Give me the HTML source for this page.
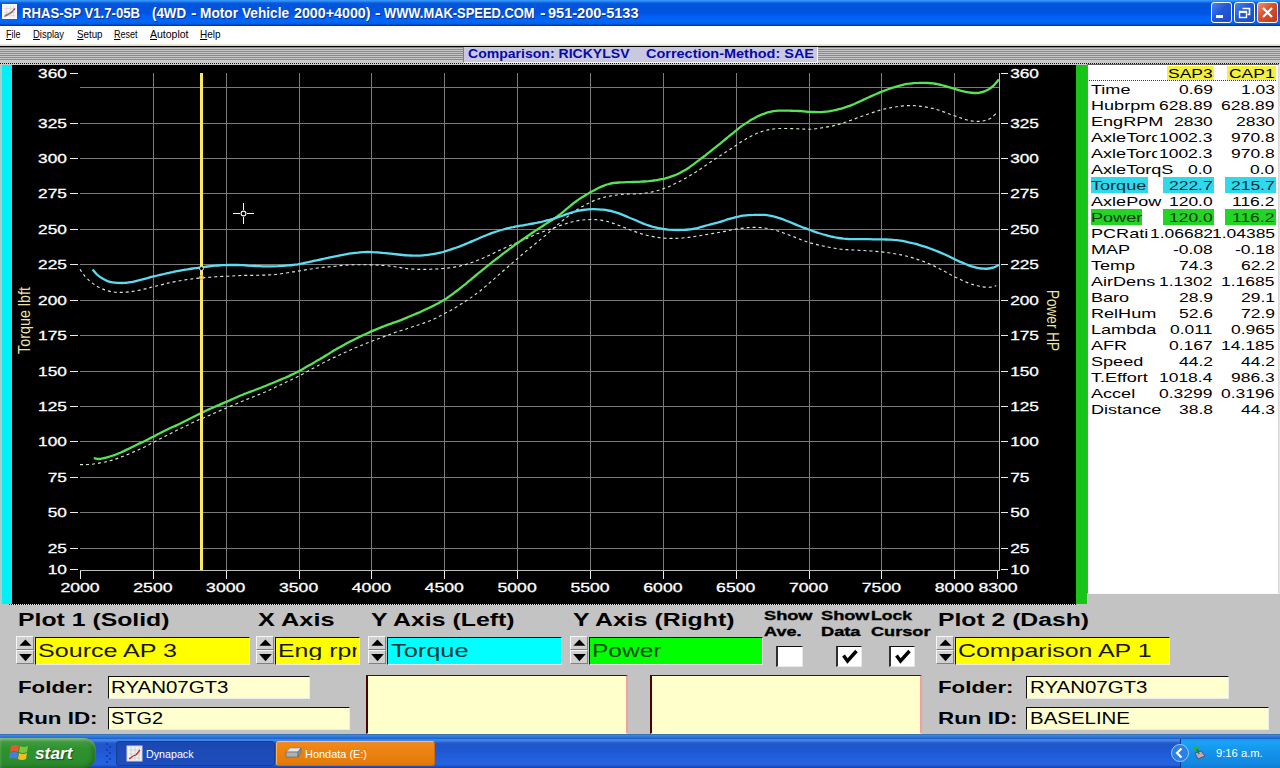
<!DOCTYPE html>
<html lang="en">
<head>
<meta charset="utf-8">
<title>RHAS-SP V1.7-05B (4WD - Motor Vehicle 2000+4000) - WWW.MAK-SPEED.COM - 951-200-5133</title>
<style>
html,body{margin:0;padding:0;}
body{width:1280px;height:768px;overflow:hidden;background:#c3c3c3;font-family:"Liberation Sans",sans-serif;}
#screen{position:relative;width:1280px;height:768px;overflow:hidden;background:#c3c3c3;}
.b{position:absolute;box-sizing:border-box;}
.t{position:absolute;white-space:pre;transform-origin:0 0;display:block;}
svg{position:absolute;left:0;top:0;}
#titlebar{background:linear-gradient(to bottom,#3598ff 0%,#2f8ff8 4%,#0a5edc 11%,#0456da 16%,#0054dc 30%,#0055e6 52%,#0060f6 64%,#0068f8 80%,#0062ee 90%,#0048c8 95%,#002c98 100%);}
.cap{border:1px solid #fff;border-radius:3px;background:linear-gradient(135deg,#4a86f0 0%,#2258d8 45%,#1c4cc8 100%);}
.cap.close{background:linear-gradient(135deg,#f09070 0%,#d8502c 45%,#c03818 100%);}
#menubar{background:linear-gradient(to bottom,#fcfcff 0%,#fff 30%,#fff 86%,#f2f2dc 91%,#d4d4ae 100%);}
#stripes{background:repeating-linear-gradient(to bottom,#8a8a8a 0px,#8a8a8a 1px,#c6c6c6 1px,#c6c6c6 2px);}
#dots{background:repeating-linear-gradient(to right,#111 0px,#111 1px,#d0d0d0 1px,#d0d0d0 2px);}
.sunk{border-top:1px solid #101010;border-left:1px solid #101010;border-right:1px solid #ececec;border-bottom:1px solid #ececec;}
.spin{background:#d0d0d0;border-top:1px solid #f8f8f8;border-left:1px solid #f8f8f8;border-right:1px solid #808080;border-bottom:1px solid #808080;}
.chk{border-left:2px solid #303030;border-right:1px solid #e8e8e8;border-bottom:1px solid #e8e8e8;}
.big{background:#ffffcc;border-top:1px solid #700000;border-left:2px solid #500000;border-right:2px solid #f0a0a0;border-bottom:1px solid #fafaf0;}
#taskbar{background:linear-gradient(to bottom,#30689c 0%,#3c86e0 4%,#2a72d8 10%,#1c62c8 13.5%,#4488ee 16.5%,#3e82ea 20%,#2862d2 25%,#2056c8 30%,#2058d4 50%,#2460dc 75%,#2462e0 90%,#1e4cc0 96%,#1a3ca4 100%);}
#start{background:linear-gradient(to bottom,#58a858 0%,#3f9c3f 12%,#2f922f 35%,#2c8e2c 70%,#2a842a 100%);border-radius:0 12px 12px 0;box-shadow:inset 0 2px 3px rgba(255,255,255,.35), inset -3px 0 4px rgba(0,40,0,.35);}
#tray{background:linear-gradient(to bottom,#1a94ee 0%,#1ba2f6 10%,#169af0 30%,#1290e8 55%,#128ae4 80%,#107cd4 100%);border-left:1px solid #0c3c94;}
.tb{border-radius:3px;}
</style>
</head>
<body>
<div id="screen">
<div class="b" id="titlebar" style="left:0px;top:0px;width:1280px;height:26px;"></div>
<svg width="20" height="22" viewBox="0 0 20 22" style="left:2px;top:4px"><rect x="0" y="0" width="15" height="15" fill="#f6f2f6"/><path d="M0.5 0.5h14v14h-14z" stroke="#fff" stroke-width="1" stroke-dasharray="1 1" fill="none"/><path d="M2 4.5h11M2 8.5h11M2 11.5h11M4.5 2v11M8.5 2v11M11.5 2v11" stroke="#d8d4dc" stroke-width="0.7" fill="none"/><path d="M2.5 12.5 L6 10.5 L9.5 8.5 L13 4.5" stroke="#a04070" stroke-width="1.3" fill="none"/><path d="M3 11 L7 9.5 L12 6" stroke="#80a060" stroke-width="1" fill="none"/></svg>
<span class="t" style="left:22.00px;top:6px;font-size:14.5px;line-height:14.5px;font-weight:bold;color:#fff;transform:scaleX(0.9057);text-shadow:1px 1px 0 #0a2f8c;">RHAS-SP V1.7-05B</span>
<span class="t" style="left:152.00px;top:6px;font-size:14.5px;line-height:14.5px;font-weight:bold;color:#fff;transform:scaleX(0.9177);text-shadow:1px 1px 0 #0a2f8c;">(4WD</span>
<span class="t" style="left:190.50px;top:6px;font-size:14.5px;line-height:14.5px;font-weight:bold;color:#fff;transform:scaleX(1.1390);text-shadow:1px 1px 0 #0a2f8c;">-</span>
<span class="t" style="left:199.50px;top:6px;font-size:14.5px;line-height:14.5px;font-weight:bold;color:#fff;transform:scaleX(0.9438);text-shadow:1px 1px 0 #0a2f8c;">Motor</span>
<span class="t" style="left:241.50px;top:6px;font-size:14.5px;line-height:14.5px;font-weight:bold;color:#fff;transform:scaleX(0.9404);text-shadow:1px 1px 0 #0a2f8c;">Vehicle</span>
<span class="t" style="left:293.50px;top:6px;font-size:14.5px;line-height:14.5px;font-weight:bold;color:#fff;transform:scaleX(0.9832);text-shadow:1px 1px 0 #0a2f8c;">2000+4000)</span>
<span class="t" style="left:374.50px;top:6px;font-size:14.5px;line-height:14.5px;font-weight:bold;color:#fff;transform:scaleX(1.1390);text-shadow:1px 1px 0 #0a2f8c;">-</span>
<span class="t" style="left:384.00px;top:6px;font-size:14.5px;line-height:14.5px;font-weight:bold;color:#fff;transform:scaleX(0.8897);text-shadow:1px 1px 0 #0a2f8c;">WWW.MAK-SPEED.COM</span>
<span class="t" style="left:539.50px;top:6px;font-size:14.5px;line-height:14.5px;font-weight:bold;color:#fff;transform:scaleX(1.1390);text-shadow:1px 1px 0 #0a2f8c;">-</span>
<span class="t" style="left:547.50px;top:6px;font-size:14.5px;line-height:14.5px;font-weight:bold;color:#fff;transform:scaleX(1.0022);text-shadow:1px 1px 0 #0a2f8c;">951-200-5133</span>
<div class="b cap" style="left:1211px;top:2px;width:21px;height:21px;"><svg width="19" height="19" viewBox="0 0 19 19"><rect x="4" y="12" width="7" height="3" fill="#fff"/></svg></div>
<div class="b cap" style="left:1234px;top:2px;width:21px;height:21px;"><svg width="19" height="19" viewBox="0 0 19 19"><path d="M7.5 5.5h7v6h-2" stroke="#fff" stroke-width="1.6" fill="none"/><rect x="4.5" y="8.5" width="7" height="6" stroke="#fff" stroke-width="1.4" fill="none"/><path d="M4.5 9h7" stroke="#fff" stroke-width="2"/></svg></div>
<div class="b cap close" style="left:1257px;top:2px;width:21px;height:21px;"><svg width="19" height="19" viewBox="0 0 19 19"><path d="M5 5l9 9M14 5l-9 9" stroke="#fff" stroke-width="2.2" fill="none"/></svg></div>
<div class="b" id="menubar" style="left:0px;top:26px;width:1280px;height:20px;"></div>
<span class="t" style="left:6px;top:29px;font-size:11px;line-height:11px;transform:scaleX(0.8181)"><u>F</u>ile</span>
<span class="t" style="left:33px;top:29px;font-size:11px;line-height:11px;transform:scaleX(0.8595)"><u>D</u>isplay</span>
<span class="t" style="left:77px;top:29px;font-size:11px;line-height:11px;transform:scaleX(0.8871)"><u>S</u>etup</span>
<span class="t" style="left:114px;top:29px;font-size:11px;line-height:11px;transform:scaleX(0.8178)"><u>R</u>eset</span>
<span class="t" style="left:150px;top:29px;font-size:11px;line-height:11px;transform:scaleX(0.9538)"><u>A</u>utoplot</span>
<span class="t" style="left:200px;top:29px;font-size:11px;line-height:11px;transform:scaleX(0.9061)"><u>H</u>elp</span>
<div class="b" style="left:0px;top:46px;width:1280px;height:1px;background:#000;"></div>
<div class="b" id="stripes" style="left:0px;top:47px;width:1280px;height:13px;"></div>
<div class="b" style="left:0px;top:60px;width:1280px;height:5px;background:#cacaca;"></div>
<div class="b" id="dots" style="left:0px;top:63px;width:1280px;height:1px;"></div>
<div class="b" style="left:463px;top:47px;width:355px;height:16px;background:#c8c9e0;border-left:1px solid #808080;border-right:1px solid #f8f8f8;border-bottom:1px solid #f4f4f4;"></div>
<span class="t" style="left:467.50px;top:47px;font-size:13.5px;line-height:13.5px;font-weight:bold;color:#0808a8;transform:scaleX(1.0402);">Comparison: RICKYLSV</span>
<span class="t" style="left:645.50px;top:47px;font-size:13.5px;line-height:13.5px;font-weight:bold;color:#0808a8;transform:scaleX(1.0718);">Correction-Method: SAE</span>
<div class="b" style="left:0px;top:65px;width:2px;height:539px;background:#a8d0c8;"></div>
<div class="b" style="left:2px;top:65px;width:10px;height:539px;background:#00f0f8;"></div>
<div class="b" style="left:12px;top:65px;width:1064px;height:539px;background:#000;"></div>
<div class="b" style="left:9px;top:604px;width:1067px;height:1px;background:repeating-linear-gradient(to right,#000 0px,#000 1px,#f0f0f0 1px,#f0f0f0 2px);"></div>
<div class="b" style="left:1076px;top:65px;width:11px;height:539px;background:#18c418;"></div>
<svg width="1280" height="768" viewBox="0 0 1280 768" font-family="Liberation Sans, sans-serif">
<path d="M80 548.5H999M80 512.5H999M80 477.5H999M80 441.5H999M80 406.5H999M80 371.5H999M80 335.5H999M80 300.5H999M80 264.5H999M80 229.5H999M80 193.5H999M80 158.5H999M80 123.5H999M80 87.5H999M153.5 73V570M226.5 73V570M299.5 73V570M371.5 73V570M444.5 73V570M517.5 73V570M590.5 73V570M663.5 73V570M736.5 73V570M809.5 73V570M881.5 73V570M954.5 73V570" stroke="#7a7a7a" stroke-width="1" fill="none" shape-rendering="crispEdges"/>
<path d="M80 570.5H1000M999.5 73V571" stroke="#bcbcbc" stroke-width="1" fill="none" shape-rendering="crispEdges"/>
<path d="M80.5 571V579M153.5 571V579M226.5 571V579M299.5 571V579M371.5 571V579M444.5 571V579M517.5 571V579M590.5 571V579M663.5 571V579M736.5 571V579M809.5 571V579M881.5 571V579M954.5 571V579M997.5 571V579M70 569.5H78M1001 569.5H1008M70 548.5H78M1001 548.5H1008M70 512.5H78M1001 512.5H1008M70 477.5H78M1001 477.5H1008M70 441.5H78M1001 441.5H1008M70 406.5H78M1001 406.5H1008M70 371.5H78M1001 371.5H1008M70 335.5H78M1001 335.5H1008M70 300.5H78M1001 300.5H1008M70 264.5H78M1001 264.5H1008M70 229.5H78M1001 229.5H1008M70 193.5H78M1001 193.5H1008M70 158.5H78M1001 158.5H1008M70 123.5H78M1001 123.5H1008M70 73.5H78M1001 73.5H1008" stroke="#ececec" stroke-width="1" fill="none" shape-rendering="crispEdges"/>
<text x="47.7" y="573.9" textLength="19.2" lengthAdjust="spacingAndGlyphs" font-size="13" fill="#fff" stroke="#fff" stroke-width="0.3">10</text>
<text x="1010.2" y="573.9" textLength="19.2" lengthAdjust="spacingAndGlyphs" font-size="13" fill="#fff" stroke="#fff" stroke-width="0.3">10</text>
<text x="47.7" y="552.7" textLength="19.2" lengthAdjust="spacingAndGlyphs" font-size="13" fill="#fff" stroke="#fff" stroke-width="0.3">25</text>
<text x="1010.2" y="552.7" textLength="19.2" lengthAdjust="spacingAndGlyphs" font-size="13" fill="#fff" stroke="#fff" stroke-width="0.3">25</text>
<text x="47.7" y="516.7" textLength="19.2" lengthAdjust="spacingAndGlyphs" font-size="13" fill="#fff" stroke="#fff" stroke-width="0.3">50</text>
<text x="1010.2" y="516.7" textLength="19.2" lengthAdjust="spacingAndGlyphs" font-size="13" fill="#fff" stroke="#fff" stroke-width="0.3">50</text>
<text x="47.7" y="481.7" textLength="19.2" lengthAdjust="spacingAndGlyphs" font-size="13" fill="#fff" stroke="#fff" stroke-width="0.3">75</text>
<text x="1010.2" y="481.7" textLength="19.2" lengthAdjust="spacingAndGlyphs" font-size="13" fill="#fff" stroke="#fff" stroke-width="0.3">75</text>
<text x="38.1" y="445.7" textLength="28.8" lengthAdjust="spacingAndGlyphs" font-size="13" fill="#fff" stroke="#fff" stroke-width="0.3">100</text>
<text x="1010.2" y="445.7" textLength="28.8" lengthAdjust="spacingAndGlyphs" font-size="13" fill="#fff" stroke="#fff" stroke-width="0.3">100</text>
<text x="38.1" y="410.7" textLength="28.8" lengthAdjust="spacingAndGlyphs" font-size="13" fill="#fff" stroke="#fff" stroke-width="0.3">125</text>
<text x="1010.2" y="410.7" textLength="28.8" lengthAdjust="spacingAndGlyphs" font-size="13" fill="#fff" stroke="#fff" stroke-width="0.3">125</text>
<text x="38.1" y="375.7" textLength="28.8" lengthAdjust="spacingAndGlyphs" font-size="13" fill="#fff" stroke="#fff" stroke-width="0.3">150</text>
<text x="1010.2" y="375.7" textLength="28.8" lengthAdjust="spacingAndGlyphs" font-size="13" fill="#fff" stroke="#fff" stroke-width="0.3">150</text>
<text x="38.1" y="339.7" textLength="28.8" lengthAdjust="spacingAndGlyphs" font-size="13" fill="#fff" stroke="#fff" stroke-width="0.3">175</text>
<text x="1010.2" y="339.7" textLength="28.8" lengthAdjust="spacingAndGlyphs" font-size="13" fill="#fff" stroke="#fff" stroke-width="0.3">175</text>
<text x="38.1" y="304.7" textLength="28.8" lengthAdjust="spacingAndGlyphs" font-size="13" fill="#fff" stroke="#fff" stroke-width="0.3">200</text>
<text x="1010.2" y="304.7" textLength="28.8" lengthAdjust="spacingAndGlyphs" font-size="13" fill="#fff" stroke="#fff" stroke-width="0.3">200</text>
<text x="38.1" y="268.7" textLength="28.8" lengthAdjust="spacingAndGlyphs" font-size="13" fill="#fff" stroke="#fff" stroke-width="0.3">225</text>
<text x="1010.2" y="268.7" textLength="28.8" lengthAdjust="spacingAndGlyphs" font-size="13" fill="#fff" stroke="#fff" stroke-width="0.3">225</text>
<text x="38.1" y="233.7" textLength="28.8" lengthAdjust="spacingAndGlyphs" font-size="13" fill="#fff" stroke="#fff" stroke-width="0.3">250</text>
<text x="1010.2" y="233.7" textLength="28.8" lengthAdjust="spacingAndGlyphs" font-size="13" fill="#fff" stroke="#fff" stroke-width="0.3">250</text>
<text x="38.1" y="197.7" textLength="28.8" lengthAdjust="spacingAndGlyphs" font-size="13" fill="#fff" stroke="#fff" stroke-width="0.3">275</text>
<text x="1010.2" y="197.7" textLength="28.8" lengthAdjust="spacingAndGlyphs" font-size="13" fill="#fff" stroke="#fff" stroke-width="0.3">275</text>
<text x="38.1" y="162.7" textLength="28.8" lengthAdjust="spacingAndGlyphs" font-size="13" fill="#fff" stroke="#fff" stroke-width="0.3">300</text>
<text x="1010.2" y="162.7" textLength="28.8" lengthAdjust="spacingAndGlyphs" font-size="13" fill="#fff" stroke="#fff" stroke-width="0.3">300</text>
<text x="38.1" y="127.7" textLength="28.8" lengthAdjust="spacingAndGlyphs" font-size="13" fill="#fff" stroke="#fff" stroke-width="0.3">325</text>
<text x="1010.2" y="127.7" textLength="28.8" lengthAdjust="spacingAndGlyphs" font-size="13" fill="#fff" stroke="#fff" stroke-width="0.3">325</text>
<text x="38.1" y="77.7" textLength="28.8" lengthAdjust="spacingAndGlyphs" font-size="13" fill="#fff" stroke="#fff" stroke-width="0.3">360</text>
<text x="1010.2" y="77.7" textLength="28.8" lengthAdjust="spacingAndGlyphs" font-size="13" fill="#fff" stroke="#fff" stroke-width="0.3">360</text>
<text x="60.4" y="591.7" textLength="39.2" lengthAdjust="spacingAndGlyphs" font-size="13" fill="#fff" stroke="#fff" stroke-width="0.3">2000</text>
<text x="133.3" y="591.7" textLength="39.2" lengthAdjust="spacingAndGlyphs" font-size="13" fill="#fff" stroke="#fff" stroke-width="0.3">2500</text>
<text x="206.1" y="591.7" textLength="39.2" lengthAdjust="spacingAndGlyphs" font-size="13" fill="#fff" stroke="#fff" stroke-width="0.3">3000</text>
<text x="279.0" y="591.7" textLength="39.2" lengthAdjust="spacingAndGlyphs" font-size="13" fill="#fff" stroke="#fff" stroke-width="0.3">3500</text>
<text x="351.8" y="591.7" textLength="39.2" lengthAdjust="spacingAndGlyphs" font-size="13" fill="#fff" stroke="#fff" stroke-width="0.3">4000</text>
<text x="424.7" y="591.7" textLength="39.2" lengthAdjust="spacingAndGlyphs" font-size="13" fill="#fff" stroke="#fff" stroke-width="0.3">4500</text>
<text x="497.5" y="591.7" textLength="39.2" lengthAdjust="spacingAndGlyphs" font-size="13" fill="#fff" stroke="#fff" stroke-width="0.3">5000</text>
<text x="570.4" y="591.7" textLength="39.2" lengthAdjust="spacingAndGlyphs" font-size="13" fill="#fff" stroke="#fff" stroke-width="0.3">5500</text>
<text x="643.3" y="591.7" textLength="39.2" lengthAdjust="spacingAndGlyphs" font-size="13" fill="#fff" stroke="#fff" stroke-width="0.3">6000</text>
<text x="716.1" y="591.7" textLength="39.2" lengthAdjust="spacingAndGlyphs" font-size="13" fill="#fff" stroke="#fff" stroke-width="0.3">6500</text>
<text x="789.0" y="591.7" textLength="39.2" lengthAdjust="spacingAndGlyphs" font-size="13" fill="#fff" stroke="#fff" stroke-width="0.3">7000</text>
<text x="861.8" y="591.7" textLength="39.2" lengthAdjust="spacingAndGlyphs" font-size="13" fill="#fff" stroke="#fff" stroke-width="0.3">7500</text>
<text x="934.7" y="591.7" textLength="39.2" lengthAdjust="spacingAndGlyphs" font-size="13" fill="#fff" stroke="#fff" stroke-width="0.3">8000</text>
<text x="978.4" y="591.7" textLength="39.2" lengthAdjust="spacingAndGlyphs" font-size="13" fill="#fff" stroke="#fff" stroke-width="0.3">8300</text>
<text transform="translate(30.2,354) scale(1.17,1) rotate(-90)" font-size="13.5" fill="#ece4a4" textLength="67" lengthAdjust="spacingAndGlyphs">Torque lbft</text>
<text transform="translate(1047,290) scale(1.17,1) rotate(90)" font-size="13.5" fill="#ece4a4" textLength="61" lengthAdjust="spacingAndGlyphs">Power HP</text>
<path d="M80.0 464.6C80.8 464.6 83.3 464.6 85.0 464.6C86.7 464.5 88.3 464.5 90.0 464.4C91.7 464.3 93.4 464.1 95.0 463.8C96.7 463.6 98.4 463.3 100.0 462.9C101.7 462.6 103.4 462.3 105.0 462.0C106.7 461.6 108.4 461.3 110.0 460.8C111.7 460.4 113.4 459.9 115.0 459.3C116.7 458.7 118.4 458.1 120.1 457.4C121.7 456.8 123.4 456.2 125.1 455.5C126.7 454.8 128.4 454.2 130.1 453.5C131.7 452.8 133.4 452.0 135.1 451.3C136.7 450.6 138.4 449.8 140.1 449.0C141.8 448.3 143.4 447.5 145.1 446.7C146.8 445.9 148.4 445.0 150.1 444.1C151.8 443.3 153.4 442.3 155.1 441.5C156.8 440.6 158.4 439.7 160.1 438.8C161.8 437.9 163.5 437.1 165.1 436.2C166.8 435.4 168.5 434.5 170.1 433.7C171.8 432.9 173.5 432.0 175.1 431.2C176.8 430.4 178.5 429.5 180.1 428.7C181.8 427.9 183.5 427.1 185.1 426.3C186.8 425.5 188.5 424.7 190.2 423.9C191.8 423.1 193.5 422.3 195.2 421.6C196.8 420.8 198.5 420.0 200.2 419.3C201.8 418.5 203.5 417.8 205.2 417.1C206.8 416.4 208.5 415.7 210.2 414.9C211.9 414.2 213.5 413.5 215.2 412.8C216.9 412.1 218.5 411.3 220.2 410.6C221.9 409.9 223.5 409.2 225.2 408.5C226.9 407.8 228.5 407.1 230.2 406.4C231.9 405.7 233.6 405.0 235.2 404.3C236.9 403.6 238.6 402.8 240.2 402.1C241.9 401.4 243.6 400.7 245.2 400.0C246.9 399.3 248.6 398.7 250.2 398.0C251.9 397.4 253.6 396.8 255.2 396.1C256.9 395.4 258.6 394.7 260.3 394.0C261.9 393.3 263.6 392.6 265.3 391.9C266.9 391.1 268.6 390.4 270.3 389.7C271.9 388.9 273.6 388.1 275.3 387.3C276.9 386.5 278.6 385.7 280.3 384.9C282.0 384.1 283.6 383.3 285.3 382.5C287.0 381.7 288.6 381.0 290.3 380.2C292.0 379.4 293.6 378.7 295.3 377.9C297.0 377.1 298.6 376.2 300.3 375.3C302.0 374.4 303.7 373.5 305.3 372.6C307.0 371.6 308.7 370.7 310.3 369.8C312.0 368.8 313.7 368.0 315.3 367.1C317.0 366.2 318.7 365.3 320.3 364.4C322.0 363.5 323.7 362.6 325.3 361.8C327.0 360.9 328.7 360.1 330.4 359.2C332.0 358.4 333.7 357.6 335.4 356.9C337.0 356.1 338.7 355.4 340.4 354.6C342.0 353.8 343.7 353.1 345.4 352.3C347.0 351.5 348.7 350.7 350.4 350.0C352.1 349.2 353.7 348.5 355.4 347.8C357.1 347.1 358.7 346.4 360.4 345.8C362.1 345.1 363.7 344.4 365.4 343.8C367.1 343.1 368.7 342.4 370.4 341.8C372.1 341.1 373.8 340.5 375.4 339.8C377.1 339.2 378.8 338.6 380.4 338.0C382.1 337.3 383.8 336.7 385.4 336.1C387.1 335.5 388.8 334.8 390.4 334.2C392.1 333.6 393.8 332.9 395.4 332.3C397.1 331.8 398.8 331.2 400.5 330.7C402.1 330.2 403.8 329.7 405.5 329.2C407.1 328.6 408.8 328.0 410.5 327.5C412.1 326.9 413.8 326.4 415.5 325.8C417.1 325.3 418.8 324.8 420.5 324.2C422.2 323.6 423.8 323.1 425.5 322.5C427.2 321.8 428.8 321.2 430.5 320.5C432.2 319.8 433.8 319.1 435.5 318.3C437.2 317.5 438.8 316.6 440.5 315.8C442.2 314.9 443.8 314.0 445.5 313.1C447.2 312.2 448.9 311.3 450.5 310.4C452.2 309.4 453.9 308.5 455.5 307.5C457.2 306.5 458.9 305.5 460.5 304.5C462.2 303.5 463.9 302.4 465.5 301.3C467.2 300.2 468.9 299.1 470.6 297.9C472.2 296.7 473.9 295.6 475.6 294.3C477.2 293.1 478.9 291.9 480.6 290.5C482.2 289.2 483.9 287.8 485.6 286.4C487.2 284.9 488.9 283.4 490.6 282.0C492.3 280.5 493.9 279.1 495.6 277.6C497.3 276.1 498.9 274.7 500.6 273.2C502.3 271.8 503.9 270.3 505.6 268.9C507.3 267.4 508.9 266.0 510.6 264.6C512.3 263.1 513.9 261.7 515.6 260.2C517.3 258.8 519.0 257.3 520.6 255.9C522.3 254.4 524.0 253.0 525.6 251.6C527.3 250.2 529.0 248.9 530.6 247.5C532.3 246.2 534.0 244.9 535.6 243.5C537.3 242.1 539.0 240.8 540.7 239.4C542.3 238.0 544.0 236.6 545.7 235.2C547.3 233.8 549.0 232.4 550.7 230.9C552.3 229.5 554.0 227.9 555.7 226.5C557.3 225.0 559.0 223.5 560.7 222.1C562.4 220.7 564.0 219.4 565.7 218.1C567.4 216.8 569.0 215.4 570.7 214.2C572.4 212.9 574.0 211.7 575.7 210.6C577.4 209.4 579.0 208.4 580.7 207.4C582.4 206.4 584.0 205.6 585.7 204.7C587.4 203.8 589.1 203.0 590.7 202.2C592.4 201.4 594.1 200.6 595.7 199.9C597.4 199.3 599.1 198.7 600.7 198.2C602.4 197.7 604.1 197.3 605.7 196.9C607.4 196.6 609.1 196.2 610.8 195.9C612.4 195.6 614.1 195.3 615.8 195.1C617.4 194.8 619.1 194.6 620.8 194.4C622.4 194.3 624.1 194.2 625.8 194.2C627.4 194.1 629.1 194.0 630.8 194.0C632.5 194.0 634.1 193.9 635.8 193.9C637.5 193.8 639.1 193.7 640.8 193.6C642.5 193.4 644.1 193.3 645.8 193.0C647.5 192.8 649.1 192.5 650.8 192.2C652.5 191.8 654.1 191.5 655.8 191.0C657.5 190.6 659.2 190.1 660.8 189.6C662.5 189.1 664.2 188.5 665.8 187.8C667.5 187.2 669.2 186.4 670.8 185.7C672.5 184.9 674.2 184.2 675.8 183.3C677.5 182.5 679.2 181.7 680.9 180.8C682.5 179.9 684.2 178.9 685.9 178.0C687.5 177.0 689.2 176.0 690.9 175.0C692.5 174.0 694.2 173.0 695.9 172.0C697.5 170.9 699.2 169.8 700.9 168.7C702.5 167.6 704.2 166.4 705.9 165.3C707.6 164.1 709.2 163.0 710.9 161.8C712.6 160.7 714.2 159.6 715.9 158.5C717.6 157.5 719.2 156.4 720.9 155.3C722.6 154.3 724.2 153.2 725.9 152.1C727.6 151.0 729.3 149.9 730.9 148.8C732.6 147.7 734.3 146.5 735.9 145.4C737.6 144.3 739.3 143.1 740.9 142.0C742.6 141.0 744.3 139.9 745.9 139.0C747.6 138.0 749.3 137.1 751.0 136.2C752.6 135.4 754.3 134.6 756.0 133.8C757.6 133.1 759.3 132.5 761.0 131.9C762.6 131.3 764.3 130.8 766.0 130.3C767.6 129.9 769.3 129.5 771.0 129.3C772.6 129.0 774.3 128.8 776.0 128.7C777.7 128.5 779.3 128.5 781.0 128.5C782.7 128.5 784.3 128.5 786.0 128.5C787.7 128.5 789.3 128.6 791.0 128.6C792.7 128.6 794.3 128.7 796.0 128.7C797.7 128.8 799.4 128.9 801.0 128.9C802.7 129.0 804.4 129.1 806.0 129.2C807.7 129.2 809.4 129.2 811.0 129.2C812.7 129.1 814.4 128.9 816.0 128.7C817.7 128.5 819.4 128.2 821.1 128.0C822.7 127.7 824.4 127.4 826.1 127.1C827.7 126.9 829.4 126.6 831.1 126.3C832.7 125.9 834.4 125.5 836.1 125.1C837.7 124.7 839.4 124.1 841.1 123.6C842.7 123.1 844.4 122.5 846.1 122.0C847.8 121.4 849.4 120.8 851.1 120.2C852.8 119.6 854.4 119.0 856.1 118.4C857.8 117.8 859.4 117.1 861.1 116.5C862.8 115.9 864.4 115.3 866.1 114.8C867.8 114.2 869.5 113.6 871.1 113.1C872.8 112.5 874.5 112.0 876.1 111.4C877.8 110.9 879.5 110.3 881.1 109.9C882.8 109.4 884.5 109.0 886.1 108.6C887.8 108.2 889.5 107.9 891.2 107.6C892.8 107.3 894.5 107.0 896.2 106.8C897.8 106.5 899.5 106.3 901.2 106.1C902.8 106.0 904.5 105.8 906.2 105.7C907.8 105.6 909.5 105.5 911.2 105.6C912.8 105.6 914.5 105.7 916.2 105.8C917.9 106.0 919.5 106.2 921.2 106.4C922.9 106.6 924.5 106.8 926.2 107.1C927.9 107.4 929.5 107.7 931.2 108.1C932.9 108.4 934.5 108.9 936.2 109.4C937.9 109.9 939.6 110.4 941.2 111.0C942.9 111.6 944.6 112.2 946.2 112.8C947.9 113.4 949.6 114.0 951.2 114.7C952.9 115.3 954.6 115.9 956.2 116.4C957.9 117.0 959.6 117.6 961.3 118.1C962.9 118.7 964.6 119.3 966.3 119.7C967.9 120.2 969.6 120.7 971.3 120.9C972.9 121.2 974.6 121.3 976.3 121.4C977.9 121.4 979.6 121.4 981.3 121.2C982.9 121.0 984.6 120.6 986.3 120.1C988.0 119.6 989.6 119.1 991.3 117.9C993.0 116.7 995.5 113.9 996.3 113.1" stroke="#d0e8cc" stroke-width="1.15" stroke-dasharray="3 3" fill="none"/>
<path d="M80.0 269.4C80.8 270.6 83.3 274.4 85.0 276.4C86.7 278.3 88.3 279.8 90.0 281.2C91.7 282.7 93.4 283.9 95.0 285.0C96.7 286.1 98.4 287.0 100.0 287.8C101.7 288.7 103.4 289.4 105.0 289.9C106.7 290.5 108.4 291.0 110.0 291.4C111.7 291.8 113.4 292.0 115.0 292.2C116.7 292.4 118.4 292.4 120.1 292.4C121.7 292.4 123.4 292.3 125.1 292.2C126.7 292.1 128.4 291.9 130.1 291.7C131.7 291.5 133.4 291.2 135.1 291.0C136.7 290.7 138.4 290.4 140.1 290.1C141.8 289.7 143.4 289.3 145.1 288.9C146.8 288.5 148.4 288.0 150.1 287.6C151.8 287.1 153.4 286.7 155.1 286.3C156.8 285.9 158.4 285.5 160.1 285.1C161.8 284.6 163.5 284.2 165.1 283.8C166.8 283.4 168.5 283.0 170.1 282.6C171.8 282.2 173.5 281.9 175.1 281.6C176.8 281.3 178.5 281.0 180.1 280.7C181.8 280.5 183.5 280.2 185.1 279.9C186.8 279.6 188.5 279.3 190.2 279.1C191.8 278.9 193.5 278.7 195.2 278.5C196.8 278.3 198.5 278.2 200.2 278.1C201.8 277.9 203.5 277.8 205.2 277.6C206.8 277.5 208.5 277.3 210.2 277.2C211.9 277.0 213.5 276.9 215.2 276.8C216.9 276.6 218.5 276.6 220.2 276.5C221.9 276.4 223.5 276.4 225.2 276.3C226.9 276.2 228.5 276.2 230.2 276.1C231.9 276.0 233.6 275.9 235.2 275.8C236.9 275.7 238.6 275.6 240.2 275.5C241.9 275.5 243.6 275.4 245.2 275.4C246.9 275.4 248.6 275.4 250.2 275.4C251.9 275.4 253.6 275.4 255.2 275.4C256.9 275.3 258.6 275.3 260.3 275.2C261.9 275.2 263.6 275.1 265.3 275.1C266.9 275.0 268.6 274.9 270.3 274.8C271.9 274.7 273.6 274.6 275.3 274.5C276.9 274.3 278.6 274.1 280.3 273.9C282.0 273.6 283.6 273.4 285.3 273.1C287.0 272.8 288.6 272.6 290.3 272.3C292.0 272.0 293.6 271.8 295.3 271.5C297.0 271.3 298.6 271.0 300.3 270.7C302.0 270.5 303.7 270.2 305.3 269.9C307.0 269.6 308.7 269.3 310.3 269.0C312.0 268.8 313.7 268.6 315.3 268.3C317.0 268.1 318.7 267.9 320.3 267.7C322.0 267.5 323.7 267.3 325.3 267.1C327.0 267.0 328.7 266.8 330.4 266.7C332.0 266.5 333.7 266.4 335.4 266.2C337.0 266.0 338.7 265.8 340.4 265.6C342.0 265.5 343.7 265.3 345.4 265.2C347.0 265.1 348.7 264.9 350.4 264.9C352.1 264.8 353.7 264.7 355.4 264.7C357.1 264.7 358.7 264.7 360.4 264.7C362.1 264.7 363.7 264.7 365.4 264.7C367.1 264.8 368.7 264.8 370.4 264.8C372.1 264.9 373.8 264.9 375.4 265.0C377.1 265.1 378.8 265.2 380.4 265.3C382.1 265.3 383.8 265.4 385.4 265.6C387.1 265.7 388.8 265.9 390.4 266.1C392.1 266.3 393.8 266.6 395.4 266.8C397.1 267.1 398.8 267.3 400.5 267.6C402.1 267.9 403.8 268.1 405.5 268.4C407.1 268.6 408.8 268.8 410.5 268.9C412.1 269.1 413.8 269.2 415.5 269.2C417.1 269.3 418.8 269.3 420.5 269.4C422.2 269.4 423.8 269.4 425.5 269.4C427.2 269.4 428.8 269.4 430.5 269.3C432.2 269.2 433.8 269.1 435.5 269.0C437.2 268.9 438.8 268.8 440.5 268.7C442.2 268.6 443.8 268.4 445.5 268.3C447.2 268.1 448.9 267.9 450.5 267.7C452.2 267.5 453.9 267.2 455.5 266.9C457.2 266.6 458.9 266.3 460.5 265.9C462.2 265.5 463.9 265.1 465.5 264.6C467.2 264.1 468.9 263.5 470.6 262.9C472.2 262.4 473.9 261.7 475.6 261.1C477.2 260.5 478.9 259.8 480.6 259.1C482.2 258.4 483.9 257.7 485.6 256.9C487.2 256.2 488.9 255.5 490.6 254.7C492.3 253.9 493.9 253.1 495.6 252.2C497.3 251.4 498.9 250.6 500.6 249.8C502.3 249.0 503.9 248.2 505.6 247.5C507.3 246.7 508.9 246.0 510.6 245.3C512.3 244.6 513.9 243.9 515.6 243.2C517.3 242.5 519.0 241.8 520.6 241.1C522.3 240.3 524.0 239.6 525.6 238.9C527.3 238.1 529.0 237.3 530.6 236.6C532.3 235.9 534.0 235.1 535.6 234.4C537.3 233.7 539.0 233.1 540.7 232.5C542.3 231.9 544.0 231.3 545.7 230.8C547.3 230.2 549.0 229.7 550.7 229.1C552.3 228.5 554.0 227.9 555.7 227.3C557.3 226.7 559.0 226.0 560.7 225.4C562.4 224.8 564.0 224.2 565.7 223.7C567.4 223.2 569.0 222.7 570.7 222.2C572.4 221.8 574.0 221.4 575.7 221.1C577.4 220.7 579.0 220.4 580.7 220.2C582.4 220.0 584.0 219.8 585.7 219.7C587.4 219.6 589.1 219.6 590.7 219.5C592.4 219.5 594.1 219.5 595.7 219.6C597.4 219.7 599.1 219.9 600.7 220.1C602.4 220.4 604.1 220.7 605.7 221.1C607.4 221.5 609.1 222.0 610.8 222.5C612.4 223.0 614.1 223.6 615.8 224.2C617.4 224.8 619.1 225.5 620.8 226.1C622.4 226.8 624.1 227.4 625.8 228.1C627.4 228.7 629.1 229.4 630.8 230.0C632.5 230.6 634.1 231.3 635.8 231.9C637.5 232.5 639.1 233.0 640.8 233.6C642.5 234.1 644.1 234.6 645.8 235.0C647.5 235.5 649.1 235.9 650.8 236.2C652.5 236.5 654.1 236.8 655.8 237.1C657.5 237.4 659.2 237.6 660.8 237.8C662.5 238.0 664.2 238.2 665.8 238.3C667.5 238.4 669.2 238.4 670.8 238.4C672.5 238.5 674.2 238.4 675.8 238.3C677.5 238.3 679.2 238.2 680.9 238.1C682.5 238.0 684.2 237.8 685.9 237.6C687.5 237.5 689.2 237.3 690.9 237.1C692.5 236.8 694.2 236.6 695.9 236.3C697.5 236.0 699.2 235.8 700.9 235.5C702.5 235.2 704.2 234.9 705.9 234.6C707.6 234.3 709.2 234.1 710.9 233.8C712.6 233.5 714.2 233.3 715.9 233.0C717.6 232.7 719.2 232.4 720.9 232.1C722.6 231.8 724.2 231.4 725.9 231.1C727.6 230.7 729.3 230.4 730.9 230.0C732.6 229.7 734.3 229.4 735.9 229.1C737.6 228.9 739.3 228.6 740.9 228.4C742.6 228.2 744.3 228.0 745.9 227.8C747.6 227.7 749.3 227.5 751.0 227.5C752.6 227.4 754.3 227.4 756.0 227.4C757.6 227.4 759.3 227.5 761.0 227.6C762.6 227.7 764.3 227.9 766.0 228.2C767.6 228.5 769.3 228.8 771.0 229.2C772.6 229.5 774.3 229.9 776.0 230.4C777.7 230.9 779.3 231.4 781.0 232.0C782.7 232.6 784.3 233.3 786.0 233.9C787.7 234.6 789.3 235.2 791.0 235.8C792.7 236.4 794.3 237.0 796.0 237.6C797.7 238.2 799.4 238.9 801.0 239.6C802.7 240.2 804.4 241.0 806.0 241.5C807.7 242.1 809.4 242.7 811.0 243.1C812.7 243.6 814.4 244.0 816.0 244.4C817.7 244.8 819.4 245.2 821.1 245.6C822.7 245.9 824.4 246.3 826.1 246.7C827.7 247.0 829.4 247.3 831.1 247.6C832.7 247.9 834.4 248.2 836.1 248.5C837.7 248.8 839.4 249.0 841.1 249.2C842.7 249.4 844.4 249.5 846.1 249.6C847.8 249.7 849.4 249.7 851.1 249.8C852.8 249.9 854.4 250.0 856.1 250.1C857.8 250.2 859.4 250.3 861.1 250.4C862.8 250.5 864.4 250.6 866.1 250.7C867.8 250.8 869.5 250.9 871.1 251.0C872.8 251.2 874.5 251.3 876.1 251.4C877.8 251.6 879.5 251.7 881.1 251.9C882.8 252.1 884.5 252.2 886.1 252.4C887.8 252.6 889.5 252.9 891.2 253.1C892.8 253.4 894.5 253.7 896.2 254.0C897.8 254.3 899.5 254.6 901.2 254.9C902.8 255.3 904.5 255.6 906.2 256.0C907.8 256.4 909.5 256.9 911.2 257.4C912.8 257.9 914.5 258.4 916.2 259.0C917.9 259.5 919.5 260.1 921.2 260.7C922.9 261.3 924.5 261.9 926.2 262.6C927.9 263.2 929.5 263.9 931.2 264.7C932.9 265.4 934.5 266.2 936.2 267.0C937.9 267.8 939.6 268.7 941.2 269.6C942.9 270.4 944.6 271.4 946.2 272.2C947.9 273.1 949.6 274.0 951.2 274.9C952.9 275.8 954.6 276.6 956.2 277.5C957.9 278.3 959.6 279.1 961.3 279.9C962.9 280.7 964.6 281.5 966.3 282.1C967.9 282.8 969.6 283.4 971.3 284.0C972.9 284.5 974.6 285.1 976.3 285.5C977.9 285.9 979.6 286.4 981.3 286.6C982.9 286.9 984.6 287.1 986.3 287.1C988.0 287.2 989.6 287.4 991.3 287.1C993.0 286.9 995.5 285.9 996.3 285.6" stroke="#d8e8e8" stroke-width="1.15" stroke-dasharray="3 3" fill="none"/>
<path d="M93.8 458.1C94.6 458.2 97.1 459.0 98.8 459.0C100.5 459.0 102.1 458.5 103.8 458.1C105.5 457.8 107.1 457.4 108.8 456.9C110.5 456.5 112.1 455.9 113.8 455.3C115.5 454.7 117.1 454.0 118.8 453.3C120.5 452.6 122.1 451.8 123.8 451.1C125.5 450.3 127.1 449.5 128.8 448.7C130.5 447.9 132.1 447.0 133.8 446.2C135.5 445.4 137.1 444.6 138.8 443.8C140.5 443.0 142.1 442.3 143.8 441.5C145.5 440.7 147.1 439.9 148.8 439.0C150.5 438.2 152.1 437.3 153.8 436.4C155.5 435.5 157.1 434.6 158.8 433.8C160.5 432.9 162.1 432.1 163.8 431.2C165.5 430.4 167.1 429.6 168.8 428.8C170.5 428.1 172.1 427.3 173.8 426.5C175.5 425.7 177.1 425.0 178.8 424.2C180.5 423.4 182.1 422.6 183.8 421.8C185.5 421.0 187.1 420.2 188.8 419.3C190.5 418.5 192.1 417.6 193.8 416.8C195.5 415.9 197.1 415.0 198.8 414.2C200.5 413.4 202.1 412.5 203.8 411.7C205.5 411.0 207.1 410.2 208.8 409.4C210.5 408.7 212.1 407.9 213.8 407.2C215.5 406.5 217.1 405.8 218.8 405.1C220.5 404.4 222.1 403.7 223.8 402.9C225.5 402.2 227.1 401.5 228.8 400.7C230.5 400.0 232.1 399.2 233.8 398.5C235.5 397.7 237.1 396.9 238.8 396.2C240.5 395.5 242.1 394.9 243.8 394.2C245.5 393.6 247.1 393.0 248.8 392.3C250.5 391.7 252.1 391.1 253.8 390.5C255.5 389.8 257.1 389.2 258.8 388.5C260.5 387.9 262.1 387.2 263.8 386.5C265.5 385.9 267.1 385.2 268.8 384.5C270.5 383.8 272.1 383.2 273.8 382.5C275.5 381.8 277.1 381.1 278.8 380.4C280.5 379.7 282.1 379.0 283.8 378.3C285.5 377.6 287.1 376.8 288.8 376.1C290.5 375.3 292.1 374.5 293.8 373.7C295.5 372.9 297.1 372.1 298.8 371.2C300.5 370.3 302.1 369.4 303.8 368.4C305.5 367.5 307.1 366.5 308.8 365.6C310.5 364.6 312.1 363.7 313.8 362.7C315.5 361.7 317.1 360.7 318.8 359.8C320.5 358.8 322.1 357.7 323.8 356.7C325.5 355.7 327.1 354.7 328.8 353.7C330.5 352.7 332.1 351.6 333.8 350.6C335.5 349.7 337.1 348.7 338.8 347.7C340.5 346.8 342.1 345.9 343.8 344.9C345.5 344.0 347.1 343.1 348.8 342.3C350.5 341.4 352.1 340.5 353.8 339.7C355.5 338.8 357.1 338.0 358.8 337.2C360.5 336.4 362.1 335.6 363.8 334.8C365.5 334.1 367.1 333.3 368.8 332.6C370.5 331.8 372.1 331.1 373.8 330.4C375.5 329.7 377.1 329.0 378.8 328.3C380.5 327.6 382.1 326.9 383.8 326.3C385.5 325.6 387.1 325.0 388.8 324.4C390.5 323.8 392.1 323.3 393.8 322.7C395.5 322.1 397.1 321.5 398.8 320.9C400.5 320.3 402.1 319.6 403.8 318.9C405.5 318.3 407.1 317.5 408.8 316.8C410.5 316.1 412.1 315.4 413.8 314.7C415.5 314.0 417.1 313.3 418.8 312.6C420.5 311.8 422.1 311.1 423.8 310.3C425.5 309.6 427.1 308.8 428.8 308.0C430.5 307.2 432.1 306.4 433.8 305.6C435.5 304.7 437.1 303.9 438.8 303.0C440.5 302.0 442.1 301.1 443.8 300.0C445.5 299.0 447.1 297.9 448.8 296.7C450.5 295.6 452.1 294.4 453.8 293.1C455.5 291.9 457.1 290.6 458.8 289.3C460.5 288.0 462.1 286.7 463.8 285.3C465.5 284.0 467.1 282.6 468.8 281.2C470.5 279.9 472.1 278.5 473.8 277.1C475.5 275.7 477.1 274.3 478.8 272.9C480.5 271.6 482.1 270.2 483.8 268.8C485.5 267.5 487.1 266.1 488.8 264.8C490.5 263.5 492.1 262.2 493.8 260.9C495.5 259.6 497.1 258.4 498.8 257.1C500.5 255.8 502.1 254.5 503.8 253.2C505.5 251.9 507.1 250.7 508.8 249.4C510.5 248.2 512.1 246.9 513.8 245.7C515.5 244.5 517.1 243.3 518.8 242.2C520.5 241.0 522.1 239.8 523.8 238.7C525.5 237.5 527.1 236.4 528.8 235.2C530.5 234.1 532.1 232.9 533.8 231.8C535.5 230.7 537.1 229.6 538.8 228.5C540.5 227.4 542.1 226.3 543.8 225.2C545.5 224.1 547.1 223.1 548.8 222.0C550.5 221.0 552.1 219.9 553.8 218.8C555.5 217.7 557.1 216.5 558.8 215.3C560.5 214.0 562.1 212.7 563.8 211.3C565.5 209.9 567.1 208.5 568.8 207.1C570.5 205.7 572.1 204.3 573.8 203.0C575.5 201.8 577.1 200.6 578.8 199.4C580.5 198.3 582.1 197.3 583.8 196.2C585.5 195.2 587.1 194.2 588.8 193.2C590.5 192.3 592.1 191.3 593.8 190.4C595.5 189.4 597.1 188.5 598.8 187.7C600.5 186.9 602.1 186.2 603.8 185.6C605.5 184.9 607.1 184.4 608.8 184.0C610.5 183.6 612.1 183.2 613.8 183.0C615.5 182.8 617.1 182.6 618.8 182.5C620.5 182.4 622.1 182.4 623.8 182.3C625.5 182.2 627.1 182.2 628.8 182.1C630.5 182.1 632.1 182.1 633.8 182.0C635.5 181.9 637.1 181.9 638.8 181.8C640.5 181.7 642.1 181.6 643.8 181.5C645.5 181.4 647.1 181.2 648.8 181.1C650.5 180.9 652.1 180.7 653.8 180.5C655.5 180.3 657.1 180.0 658.8 179.7C660.5 179.5 662.1 179.1 663.8 178.8C665.5 178.4 667.1 177.9 668.8 177.4C670.5 176.8 672.1 176.3 673.8 175.6C675.5 175.0 677.1 174.3 678.8 173.5C680.5 172.7 682.1 171.8 683.8 170.8C685.5 169.8 687.1 168.8 688.8 167.7C690.5 166.5 692.1 165.3 693.8 164.1C695.5 162.8 697.1 161.6 698.8 160.3C700.5 159.0 702.1 157.8 703.8 156.5C705.5 155.2 707.1 153.9 708.8 152.6C710.5 151.4 712.1 150.1 713.8 148.7C715.5 147.4 717.1 146.1 718.8 144.7C720.5 143.4 722.1 142.0 723.8 140.6C725.5 139.2 727.1 137.8 728.8 136.4C730.5 135.0 732.1 133.6 733.8 132.3C735.5 130.9 737.1 129.6 738.8 128.3C740.5 127.0 742.1 125.7 743.8 124.6C745.5 123.4 747.1 122.4 748.8 121.4C750.5 120.3 752.1 119.4 753.8 118.4C755.5 117.5 757.1 116.6 758.8 115.8C760.5 115.1 762.1 114.4 763.8 113.8C765.5 113.2 767.1 112.6 768.8 112.2C770.5 111.8 772.1 111.4 773.8 111.1C775.5 110.9 777.1 110.8 778.8 110.7C780.5 110.6 782.1 110.7 783.8 110.7C785.5 110.7 787.1 110.7 788.8 110.7C790.5 110.7 792.1 110.8 793.8 110.8C795.5 110.9 797.1 110.9 798.8 111.0C800.5 111.1 802.1 111.3 803.8 111.4C805.5 111.5 807.1 111.7 808.8 111.8C810.5 111.9 812.1 112.0 813.8 112.0C815.5 112.1 817.1 112.1 818.8 112.1C820.5 112.0 822.1 112.1 823.8 111.9C825.5 111.8 827.1 111.7 828.8 111.4C830.5 111.1 832.1 110.7 833.8 110.4C835.5 110.0 837.1 109.6 838.8 109.1C840.5 108.7 842.1 108.3 843.8 107.8C845.5 107.3 847.1 106.8 848.8 106.2C850.5 105.6 852.1 104.9 853.8 104.2C855.5 103.4 857.1 102.7 858.8 101.9C860.5 101.1 862.1 100.4 863.8 99.6C865.5 98.8 867.1 98.0 868.8 97.3C870.5 96.5 872.1 95.8 873.8 95.0C875.5 94.3 877.1 93.6 878.8 92.9C880.5 92.2 882.1 91.5 883.8 90.9C885.5 90.2 887.1 89.6 888.8 89.0C890.5 88.5 892.1 87.9 893.8 87.4C895.5 86.8 897.1 86.3 898.8 85.9C900.5 85.4 902.1 85.0 903.8 84.6C905.5 84.2 907.1 83.9 908.8 83.7C910.5 83.4 912.1 83.3 913.8 83.1C915.5 83.0 917.1 82.9 918.8 82.9C920.5 82.8 922.1 82.8 923.8 82.8C925.5 82.8 927.1 82.8 928.8 83.0C930.5 83.1 932.1 83.3 933.8 83.5C935.5 83.8 937.1 84.1 938.8 84.5C940.5 84.8 942.1 85.3 943.8 85.7C945.5 86.1 947.1 86.6 948.8 87.1C950.5 87.6 952.1 88.1 953.8 88.6C955.5 89.1 957.1 89.6 958.8 90.1C960.5 90.6 962.1 91.0 963.8 91.4C965.5 91.8 967.1 92.2 968.8 92.4C970.5 92.7 972.1 92.9 973.8 93.0C975.5 93.0 977.1 93.1 978.8 92.8C980.5 92.6 982.1 92.3 983.8 91.7C985.5 91.1 987.1 90.2 988.8 89.2C990.5 88.1 992.1 87.0 993.8 85.4C995.5 83.8 998.0 80.4 998.8 79.4" stroke="#58e256" stroke-width="2.3" fill="none" stroke-linejoin="round"/>
<path d="M92.5 269.4C93.3 270.3 95.8 273.5 97.5 275.0C99.2 276.5 100.8 277.6 102.5 278.6C104.2 279.6 105.9 280.5 107.5 281.1C109.2 281.7 110.9 282.1 112.5 282.4C114.2 282.7 115.9 282.8 117.5 282.9C119.2 283.0 120.9 283.0 122.5 283.0C124.2 282.9 125.9 282.9 127.6 282.7C129.2 282.5 130.9 282.1 132.6 281.8C134.2 281.5 135.9 281.0 137.6 280.6C139.2 280.2 140.9 279.8 142.6 279.4C144.2 279.0 145.9 278.5 147.6 278.1C149.2 277.6 150.9 277.1 152.6 276.7C154.3 276.3 155.9 275.9 157.6 275.5C159.3 275.1 160.9 274.7 162.6 274.3C164.3 273.9 165.9 273.6 167.6 273.2C169.3 272.8 170.9 272.4 172.6 272.1C174.3 271.7 176.0 271.4 177.6 271.1C179.3 270.8 181.0 270.5 182.6 270.2C184.3 269.9 186.0 269.6 187.6 269.4C189.3 269.1 191.0 268.8 192.6 268.5C194.3 268.3 196.0 268.0 197.7 267.8C199.3 267.6 201.0 267.4 202.7 267.2C204.3 267.0 206.0 266.8 207.7 266.5C209.3 266.3 211.0 266.1 212.7 265.9C214.3 265.8 216.0 265.6 217.7 265.5C219.3 265.4 221.0 265.3 222.7 265.2C224.4 265.1 226.0 265.1 227.7 265.0C229.4 265.0 231.0 265.0 232.7 265.0C234.4 265.0 236.0 265.0 237.7 265.0C239.4 265.1 241.0 265.2 242.7 265.2C244.4 265.3 246.1 265.4 247.7 265.6C249.4 265.7 251.1 265.8 252.7 265.9C254.4 266.0 256.1 266.0 257.7 266.1C259.4 266.2 261.1 266.2 262.7 266.3C264.4 266.3 266.1 266.4 267.8 266.4C269.4 266.4 271.1 266.3 272.8 266.3C274.4 266.2 276.1 266.1 277.8 266.1C279.4 266.0 281.1 265.9 282.8 265.8C284.4 265.7 286.1 265.6 287.8 265.4C289.4 265.3 291.1 265.2 292.8 265.0C294.5 264.8 296.1 264.5 297.8 264.3C299.5 264.0 301.1 263.7 302.8 263.4C304.5 263.1 306.1 262.7 307.8 262.3C309.5 262.0 311.1 261.6 312.8 261.2C314.5 260.8 316.2 260.5 317.8 260.1C319.5 259.7 321.2 259.3 322.8 259.0C324.5 258.6 326.2 258.2 327.8 257.9C329.5 257.5 331.2 257.2 332.8 256.8C334.5 256.5 336.2 256.1 337.9 255.8C339.5 255.4 341.2 255.1 342.9 254.8C344.5 254.5 346.2 254.2 347.9 253.9C349.5 253.6 351.2 253.4 352.9 253.1C354.5 252.9 356.2 252.7 357.9 252.6C359.5 252.4 361.2 252.3 362.9 252.2C364.6 252.1 366.2 252.0 367.9 252.0C369.6 252.0 371.2 252.0 372.9 252.1C374.6 252.1 376.2 252.3 377.9 252.4C379.6 252.5 381.2 252.7 382.9 252.9C384.6 253.0 386.3 253.2 387.9 253.3C389.6 253.5 391.3 253.7 392.9 253.9C394.6 254.1 396.3 254.3 397.9 254.5C399.6 254.7 401.3 254.9 402.9 255.0C404.6 255.2 406.3 255.3 408.0 255.4C409.6 255.5 411.3 255.5 413.0 255.6C414.6 255.6 416.3 255.6 418.0 255.6C419.6 255.6 421.3 255.5 423.0 255.4C424.6 255.3 426.3 255.1 428.0 254.9C429.7 254.7 431.3 254.5 433.0 254.2C434.7 253.9 436.3 253.6 438.0 253.2C439.7 252.8 441.3 252.4 443.0 252.0C444.7 251.5 446.3 251.0 448.0 250.4C449.7 249.9 451.3 249.3 453.0 248.7C454.7 248.2 456.4 247.6 458.0 247.0C459.7 246.4 461.4 245.7 463.0 245.1C464.7 244.4 466.4 243.7 468.0 243.0C469.7 242.3 471.4 241.6 473.0 240.9C474.7 240.1 476.4 239.4 478.1 238.7C479.7 237.9 481.4 237.2 483.1 236.5C484.7 235.8 486.4 235.1 488.1 234.5C489.7 233.9 491.4 233.2 493.1 232.7C494.7 232.1 496.4 231.5 498.1 231.0C499.8 230.4 501.4 229.9 503.1 229.5C504.8 229.0 506.4 228.6 508.1 228.2C509.8 227.8 511.4 227.4 513.1 227.1C514.8 226.7 516.4 226.4 518.1 226.1C519.8 225.8 521.4 225.6 523.1 225.3C524.8 225.0 526.5 224.7 528.1 224.4C529.8 224.1 531.5 223.8 533.1 223.5C534.8 223.2 536.5 222.9 538.1 222.5C539.8 222.2 541.5 221.9 543.1 221.5C544.8 221.1 546.5 220.7 548.2 220.2C549.8 219.8 551.5 219.2 553.2 218.8C554.8 218.3 556.5 217.8 558.2 217.2C559.8 216.7 561.5 216.1 563.2 215.5C564.8 214.9 566.5 214.2 568.2 213.7C569.9 213.1 571.5 212.5 573.2 212.0C574.9 211.6 576.5 211.2 578.2 210.8C579.9 210.5 581.5 210.2 583.2 210.0C584.9 209.8 586.5 209.6 588.2 209.4C589.9 209.3 591.5 209.2 593.2 209.2C594.9 209.2 596.6 209.2 598.2 209.3C599.9 209.4 601.6 209.5 603.2 209.7C604.9 209.9 606.6 210.2 608.2 210.5C609.9 210.8 611.6 211.1 613.2 211.6C614.9 212.0 616.6 212.5 618.3 213.1C619.9 213.7 621.6 214.4 623.3 215.1C624.9 215.7 626.6 216.5 628.3 217.2C629.9 217.9 631.6 218.6 633.3 219.3C634.9 220.0 636.6 220.8 638.3 221.5C640.0 222.2 641.6 222.9 643.3 223.6C645.0 224.2 646.6 224.9 648.3 225.4C650.0 226.0 651.6 226.5 653.3 227.0C655.0 227.4 656.6 227.8 658.3 228.1C660.0 228.5 661.6 228.7 663.3 229.0C665.0 229.2 666.7 229.4 668.3 229.6C670.0 229.7 671.7 229.8 673.3 229.9C675.0 230.0 676.7 230.0 678.3 230.0C680.0 230.0 681.7 229.9 683.3 229.9C685.0 229.8 686.7 229.7 688.4 229.5C690.0 229.4 691.7 229.1 693.4 228.8C695.0 228.5 696.7 228.2 698.4 227.8C700.0 227.4 701.7 226.9 703.4 226.4C705.0 225.9 706.7 225.4 708.4 225.0C710.1 224.5 711.7 224.1 713.4 223.7C715.1 223.2 716.7 222.8 718.4 222.4C720.1 221.9 721.7 221.4 723.4 220.8C725.1 220.3 726.7 219.7 728.4 219.2C730.1 218.7 731.8 218.2 733.4 217.8C735.1 217.3 736.8 216.9 738.4 216.6C740.1 216.2 741.8 215.9 743.4 215.6C745.1 215.4 746.8 215.2 748.4 215.1C750.1 215.0 751.8 214.9 753.4 214.9C755.1 214.8 756.8 214.8 758.5 214.9C760.1 214.9 761.8 214.8 763.5 214.9C765.1 215.0 766.8 215.0 768.5 215.3C770.1 215.5 771.8 215.8 773.5 216.3C775.1 216.7 776.8 217.2 778.5 217.8C780.2 218.3 781.8 218.9 783.5 219.5C785.2 220.2 786.8 220.9 788.5 221.5C790.2 222.2 791.8 222.9 793.5 223.6C795.2 224.3 796.8 225.0 798.5 225.7C800.2 226.4 801.9 227.0 803.5 227.7C805.2 228.3 806.9 228.9 808.5 229.5C810.2 230.1 811.9 230.7 813.5 231.3C815.2 231.9 816.9 232.4 818.5 233.0C820.2 233.5 821.9 234.0 823.5 234.5C825.2 235.0 826.9 235.4 828.6 235.9C830.2 236.3 831.9 236.7 833.6 237.0C835.2 237.4 836.9 237.7 838.6 238.0C840.2 238.3 841.9 238.5 843.6 238.7C845.2 238.8 846.9 238.9 848.6 239.0C850.3 239.0 851.9 239.0 853.6 239.1C855.3 239.1 856.9 239.1 858.6 239.1C860.3 239.1 861.9 239.1 863.6 239.1C865.3 239.2 866.9 239.2 868.6 239.2C870.3 239.2 872.0 239.2 873.6 239.3C875.3 239.3 877.0 239.3 878.6 239.3C880.3 239.3 882.0 239.4 883.6 239.4C885.3 239.5 887.0 239.5 888.6 239.6C890.3 239.7 892.0 239.7 893.6 239.9C895.3 240.0 897.0 240.1 898.7 240.4C900.3 240.6 902.0 240.9 903.7 241.2C905.3 241.5 907.0 241.9 908.7 242.3C910.3 242.6 912.0 243.0 913.7 243.5C915.3 243.9 917.0 244.3 918.7 244.8C920.4 245.3 922.0 245.8 923.7 246.3C925.4 246.9 927.0 247.4 928.7 248.0C930.4 248.6 932.0 249.2 933.7 249.9C935.4 250.5 937.0 251.2 938.7 251.9C940.4 252.6 942.1 253.3 943.7 254.0C945.4 254.7 947.1 255.5 948.7 256.3C950.4 257.1 952.1 257.9 953.7 258.7C955.4 259.5 957.1 260.3 958.7 261.1C960.4 261.9 962.1 262.6 963.7 263.3C965.4 264.0 967.1 264.7 968.8 265.3C970.4 265.9 972.1 266.5 973.8 266.9C975.4 267.4 977.1 267.8 978.8 268.1C980.4 268.4 982.1 268.6 983.8 268.7C985.4 268.8 987.1 268.7 988.8 268.5C990.5 268.3 992.1 268.0 993.8 267.4C995.5 266.7 998.0 265.2 998.8 264.8" stroke="#5cdcf0" stroke-width="2.3" fill="none" stroke-linejoin="round"/>
<rect x="200" y="73" width="3" height="497" fill="#fae85e"/>
<circle cx="201.5" cy="268.5" r="2" stroke="#f0e0e0" stroke-width="1" fill="#000"/>
<circle cx="201.5" cy="277.5" r="2" stroke="#f0a040" stroke-width="1" fill="none"/>
<path d="M233 213.5H240M247 213.5H254M243.5 203V210M243.5 217V224" stroke="#fff" stroke-width="1" fill="none" shape-rendering="crispEdges"/><circle cx="243.5" cy="213.5" r="2.4" stroke="#fff" stroke-width="1.1" fill="none"/>
</svg>
<div class="b" style="left:1279px;top:64px;width:1px;height:530px;background:#e4e4e4;"></div>
<div class="b" style="left:1087px;top:64px;width:192px;height:530px;background:#fff;border-left:1px solid #808080;border-top:1px solid #606060;border-right:1px solid #d8d8d8;border-bottom:1px solid #f8f8f8;"></div>
<div class="b" style="left:1167px;top:66px;width:47px;height:14px;background:#f4f040;"></div>
<div class="b" style="left:1227px;top:66px;width:49px;height:14px;background:#f4f040;"></div>
<div class="b" style="left:1089px;top:80px;width:188px;height:1px;background:repeating-linear-gradient(to right,#404040 0px,#404040 1px,#fff 1px,#fff 2px);"></div>
<span class="t" style="left:1168.38px;top:67px;font-size:13px;line-height:13px;transform:scaleX(1.3423);">SAP3</span>
<span class="t" style="left:1229.41px;top:67px;font-size:13px;line-height:13px;transform:scaleX(1.3423);">CAP1</span>
<span class="t" style="left:1090.80px;top:83px;font-size:13px;line-height:13px;transform:scaleX(1.3893);">Time</span>
<span class="t" style="left:1178.64px;top:83px;font-size:13px;line-height:13px;transform:scaleX(1.3423);">0.69</span>
<span class="t" style="left:1240.64px;top:83px;font-size:13px;line-height:13px;transform:scaleX(1.3423);">1.03</span>
<span class="t" style="left:1090.80px;top:99px;font-size:13px;line-height:13px;transform:scaleX(1.3893);">Hubrpm</span>
<span class="t" style="left:1159.23px;top:99px;font-size:13px;line-height:13px;transform:scaleX(1.3423);">628.89</span>
<span class="t" style="left:1221.23px;top:99px;font-size:13px;line-height:13px;transform:scaleX(1.3423);">628.89</span>
<span class="t" style="left:1090.80px;top:115px;font-size:13px;line-height:13px;transform:scaleX(1.3893);">EngRPM</span>
<span class="t" style="left:1173.78px;top:115px;font-size:13px;line-height:13px;transform:scaleX(1.3423);">2830</span>
<span class="t" style="left:1235.78px;top:115px;font-size:13px;line-height:13px;transform:scaleX(1.3423);">2830</span>
<span class="t" style="left:1090.80px;top:131px;font-size:13px;line-height:13px;transform:scaleX(1.3893);clip-path:inset(0 2.93px 0 0);">AxleTorq</span>
<span class="t" style="left:1159.23px;top:131px;font-size:13px;line-height:13px;transform:scaleX(1.3423);">1002.3</span>
<span class="t" style="left:1230.93px;top:131px;font-size:13px;line-height:13px;transform:scaleX(1.3423);">970.8</span>
<span class="t" style="left:1090.80px;top:147px;font-size:13px;line-height:13px;transform:scaleX(1.3893);clip-path:inset(0 2.93px 0 0);">AxleTorq</span>
<span class="t" style="left:1159.23px;top:147px;font-size:13px;line-height:13px;transform:scaleX(1.3423);">1002.3</span>
<span class="t" style="left:1230.93px;top:147px;font-size:13px;line-height:13px;transform:scaleX(1.3423);">970.8</span>
<span class="t" style="left:1090.80px;top:163px;font-size:13px;line-height:13px;transform:scaleX(1.3893);">AxleTorqS</span>
<span class="t" style="left:1188.34px;top:163px;font-size:13px;line-height:13px;transform:scaleX(1.3423);">0.0</span>
<span class="t" style="left:1250.34px;top:163px;font-size:13px;line-height:13px;transform:scaleX(1.3423);">0.0</span>
<div class="b" style="left:1091px;top:177px;width:57px;height:16px;background:#30d8ec;"></div>
<div class="b" style="left:1163px;top:177px;width:51px;height:16px;background:#30d8ec;"></div>
<div class="b" style="left:1225px;top:177px;width:51px;height:16px;background:#30d8ec;"></div>
<span class="t" style="left:1090.80px;top:179px;font-size:13px;line-height:13px;color:#083038;transform:scaleX(1.3893);">Torque</span>
<span class="t" style="left:1168.93px;top:179px;font-size:13px;line-height:13px;color:#083038;transform:scaleX(1.3423);">222.7</span>
<span class="t" style="left:1230.93px;top:179px;font-size:13px;line-height:13px;color:#083038;transform:scaleX(1.3423);">215.7</span>
<span class="t" style="left:1090.80px;top:195px;font-size:13px;line-height:13px;transform:scaleX(1.3893);">AxlePow</span>
<span class="t" style="left:1168.93px;top:195px;font-size:13px;line-height:13px;transform:scaleX(1.3423);">120.0</span>
<span class="t" style="left:1232.23px;top:195px;font-size:13px;line-height:13px;transform:scaleX(1.3423);">116.2</span>
<div class="b" style="left:1091px;top:209px;width:51px;height:16px;background:#24d424;"></div>
<div class="b" style="left:1163px;top:209px;width:51px;height:16px;background:#24d424;"></div>
<div class="b" style="left:1225px;top:209px;width:51px;height:16px;background:#24d424;"></div>
<span class="t" style="left:1090.80px;top:211px;font-size:13px;line-height:13px;color:#083808;transform:scaleX(1.3893);">Power</span>
<span class="t" style="left:1168.93px;top:211px;font-size:13px;line-height:13px;color:#083808;transform:scaleX(1.3423);">120.0</span>
<span class="t" style="left:1232.23px;top:211px;font-size:13px;line-height:13px;color:#083808;transform:scaleX(1.3423);">116.2</span>
<span class="t" style="left:1090.80px;top:227px;font-size:13px;line-height:13px;transform:scaleX(1.3893);">PCRati</span>
<span class="t" style="left:1149.52px;top:227px;font-size:13px;line-height:13px;transform:scaleX(1.3423);">1.06682</span>
<span class="t" style="left:1211.52px;top:227px;font-size:13px;line-height:13px;transform:scaleX(1.3423);">1.04385</span>
<span class="t" style="left:1090.80px;top:243px;font-size:13px;line-height:13px;transform:scaleX(1.3893);">MAP</span>
<span class="t" style="left:1172.83px;top:243px;font-size:13px;line-height:13px;transform:scaleX(1.3423);">-0.08</span>
<span class="t" style="left:1234.83px;top:243px;font-size:13px;line-height:13px;transform:scaleX(1.3423);">-0.18</span>
<span class="t" style="left:1090.80px;top:259px;font-size:13px;line-height:13px;transform:scaleX(1.3893);">Temp</span>
<span class="t" style="left:1178.64px;top:259px;font-size:13px;line-height:13px;transform:scaleX(1.3423);">74.3</span>
<span class="t" style="left:1240.64px;top:259px;font-size:13px;line-height:13px;transform:scaleX(1.3423);">62.2</span>
<span class="t" style="left:1090.80px;top:275px;font-size:13px;line-height:13px;transform:scaleX(1.3893);">AirDens</span>
<span class="t" style="left:1159.23px;top:275px;font-size:13px;line-height:13px;transform:scaleX(1.3423);">1.1302</span>
<span class="t" style="left:1221.23px;top:275px;font-size:13px;line-height:13px;transform:scaleX(1.3423);">1.1685</span>
<span class="t" style="left:1090.80px;top:291px;font-size:13px;line-height:13px;transform:scaleX(1.3893);">Baro</span>
<span class="t" style="left:1178.64px;top:291px;font-size:13px;line-height:13px;transform:scaleX(1.3423);">28.9</span>
<span class="t" style="left:1240.64px;top:291px;font-size:13px;line-height:13px;transform:scaleX(1.3423);">29.1</span>
<span class="t" style="left:1090.80px;top:307px;font-size:13px;line-height:13px;transform:scaleX(1.3893);">RelHum</span>
<span class="t" style="left:1178.64px;top:307px;font-size:13px;line-height:13px;transform:scaleX(1.3423);">52.6</span>
<span class="t" style="left:1240.64px;top:307px;font-size:13px;line-height:13px;transform:scaleX(1.3423);">72.9</span>
<span class="t" style="left:1090.80px;top:323px;font-size:13px;line-height:13px;transform:scaleX(1.3893);">Lambda</span>
<span class="t" style="left:1170.23px;top:323px;font-size:13px;line-height:13px;transform:scaleX(1.3423);">0.011</span>
<span class="t" style="left:1230.93px;top:323px;font-size:13px;line-height:13px;transform:scaleX(1.3423);">0.965</span>
<span class="t" style="left:1090.80px;top:339px;font-size:13px;line-height:13px;transform:scaleX(1.3893);">AFR</span>
<span class="t" style="left:1168.93px;top:339px;font-size:13px;line-height:13px;transform:scaleX(1.3423);">0.167</span>
<span class="t" style="left:1221.23px;top:339px;font-size:13px;line-height:13px;transform:scaleX(1.3423);">14.185</span>
<span class="t" style="left:1090.80px;top:355px;font-size:13px;line-height:13px;transform:scaleX(1.3893);">Speed</span>
<span class="t" style="left:1178.64px;top:355px;font-size:13px;line-height:13px;transform:scaleX(1.3423);">44.2</span>
<span class="t" style="left:1240.64px;top:355px;font-size:13px;line-height:13px;transform:scaleX(1.3423);">44.2</span>
<span class="t" style="left:1090.80px;top:371px;font-size:13px;line-height:13px;transform:scaleX(1.3893);">T.Effort</span>
<span class="t" style="left:1159.23px;top:371px;font-size:13px;line-height:13px;transform:scaleX(1.3423);">1018.4</span>
<span class="t" style="left:1230.93px;top:371px;font-size:13px;line-height:13px;transform:scaleX(1.3423);">986.3</span>
<span class="t" style="left:1090.80px;top:387px;font-size:13px;line-height:13px;transform:scaleX(1.3893);">Accel</span>
<span class="t" style="left:1159.23px;top:387px;font-size:13px;line-height:13px;transform:scaleX(1.3423);">0.3299</span>
<span class="t" style="left:1221.23px;top:387px;font-size:13px;line-height:13px;transform:scaleX(1.3423);">0.3196</span>
<span class="t" style="left:1090.80px;top:403px;font-size:13px;line-height:13px;transform:scaleX(1.3893);">Distance</span>
<span class="t" style="left:1178.64px;top:403px;font-size:13px;line-height:13px;transform:scaleX(1.3423);">38.8</span>
<span class="t" style="left:1240.64px;top:403px;font-size:13px;line-height:13px;transform:scaleX(1.3423);">44.3</span>
<span class="t" style="left:18.00px;top:611px;font-size:18px;line-height:18px;font-weight:bold;transform:scaleX(1.3773);">Plot 1 (Solid)</span>
<span class="t" style="left:257.50px;top:611px;font-size:18px;line-height:18px;font-weight:bold;transform:scaleX(1.4073);">X Axis</span>
<span class="t" style="left:371.00px;top:611px;font-size:18px;line-height:18px;font-weight:bold;transform:scaleX(1.3795);">Y Axis (Left)</span>
<span class="t" style="left:572.50px;top:611px;font-size:18px;line-height:18px;font-weight:bold;transform:scaleX(1.3802);">Y Axis (Right)</span>
<span class="t" style="left:938.00px;top:611px;font-size:18px;line-height:18px;font-weight:bold;transform:scaleX(1.3726);">Plot 2 (Dash)</span>
<div class="b spin" style="left:16px;top:636px;width:18px;height:14px;"><svg width="16" height="12" viewBox="0 0 16 12"><path d="M8.4 2.6L14.4 8.8H2.4Z" fill="#000"/></svg></div>
<div class="b spin" style="left:16px;top:650px;width:18px;height:14px;"><svg width="16" height="12" viewBox="0 0 16 12"><path d="M2.2 3H14.8L8.5 10.2Z" fill="#000"/></svg></div>
<div class="b sunk" style="left:35px;top:637px;width:215px;height:28px;background:#ffff00;"></div>
<span class="t" style="left:38.00px;top:642px;font-size:18px;line-height:18px;color:#181800;transform:scaleX(1.3936);">Source AP 3</span>
<div class="b spin" style="left:256px;top:636px;width:18px;height:14px;"><svg width="16" height="12" viewBox="0 0 16 12"><path d="M8.4 2.6L14.4 8.8H2.4Z" fill="#000"/></svg></div>
<div class="b spin" style="left:256px;top:650px;width:18px;height:14px;"><svg width="16" height="12" viewBox="0 0 16 12"><path d="M2.2 3H14.8L8.5 10.2Z" fill="#000"/></svg></div>
<div class="b sunk" style="left:275px;top:637px;width:85px;height:28px;background:#ffff00;"></div>
<span class="t" style="left:278.00px;top:642px;font-size:18px;line-height:18px;color:#181800;transform:scaleX(1.3818);clip-path:inset(0 11px 0 0);">Eng rpm</span>
<div class="b spin" style="left:368px;top:636px;width:18px;height:14px;"><svg width="16" height="12" viewBox="0 0 16 12"><path d="M8.4 2.6L14.4 8.8H2.4Z" fill="#000"/></svg></div>
<div class="b spin" style="left:368px;top:650px;width:18px;height:14px;"><svg width="16" height="12" viewBox="0 0 16 12"><path d="M2.2 3H14.8L8.5 10.2Z" fill="#000"/></svg></div>
<div class="b sunk" style="left:387px;top:637px;width:175px;height:28px;background:#00ffff;"></div>
<span class="t" style="left:391.00px;top:642px;font-size:18px;line-height:18px;color:#003838;transform:scaleX(1.4081);">Torque</span>
<div class="b spin" style="left:570px;top:636px;width:18px;height:14px;"><svg width="16" height="12" viewBox="0 0 16 12"><path d="M8.4 2.6L14.4 8.8H2.4Z" fill="#000"/></svg></div>
<div class="b spin" style="left:570px;top:650px;width:18px;height:14px;"><svg width="16" height="12" viewBox="0 0 16 12"><path d="M2.2 3H14.8L8.5 10.2Z" fill="#000"/></svg></div>
<div class="b sunk" style="left:589px;top:637px;width:174px;height:28px;background:#00ff00;"></div>
<span class="t" style="left:592.00px;top:642px;font-size:18px;line-height:18px;color:#004800;transform:scaleX(1.3622);">Power</span>
<div class="b spin" style="left:936px;top:636px;width:18px;height:14px;"><svg width="16" height="12" viewBox="0 0 16 12"><path d="M8.4 2.6L14.4 8.8H2.4Z" fill="#000"/></svg></div>
<div class="b spin" style="left:936px;top:650px;width:18px;height:14px;"><svg width="16" height="12" viewBox="0 0 16 12"><path d="M2.2 3H14.8L8.5 10.2Z" fill="#000"/></svg></div>
<div class="b sunk" style="left:955px;top:637px;width:215px;height:28px;background:#ffff00;"></div>
<span class="t" style="left:958.00px;top:642px;font-size:18px;line-height:18px;color:#181800;transform:scaleX(1.3846);">Comparison AP 1</span>
<span class="t" style="left:764.00px;top:609px;font-size:13px;line-height:13px;font-weight:bold;transform:scaleX(1.3991);-webkit-text-stroke:0.35px #000;">Show</span>
<span class="t" style="left:764.00px;top:625px;font-size:13px;line-height:13px;font-weight:bold;transform:scaleX(1.3900);-webkit-text-stroke:0.35px #000;">Ave.</span>
<span class="t" style="left:821.00px;top:609px;font-size:13px;line-height:13px;font-weight:bold;transform:scaleX(1.3991);-webkit-text-stroke:0.35px #000;">Show</span>
<span class="t" style="left:821.00px;top:625px;font-size:13px;line-height:13px;font-weight:bold;transform:scaleX(1.4018);-webkit-text-stroke:0.35px #000;">Data</span>
<span class="t" style="left:871.00px;top:609px;font-size:13px;line-height:13px;font-weight:bold;transform:scaleX(1.3513);-webkit-text-stroke:0.35px #000;">Lock</span>
<span class="t" style="left:871.00px;top:625px;font-size:13px;line-height:13px;font-weight:bold;transform:scaleX(1.3961);-webkit-text-stroke:0.35px #000;">Cursor</span>
<div class="b sunk chk" style="left:776px;top:646px;width:27px;height:21px;background:#fff;"></div>
<div class="b sunk chk" style="left:836px;top:646px;width:26px;height:21px;background:#fff;"><svg width="24" height="19" viewBox="0 0 24 19"><path d="M5.5 8.5L9.5 14L18.5 4" stroke="#000" stroke-width="3.4" fill="none"/></svg></div>
<div class="b sunk chk" style="left:889px;top:646px;width:26px;height:21px;background:#fff;"><svg width="24" height="19" viewBox="0 0 24 19"><path d="M5.5 8.5L9.5 14L18.5 4" stroke="#000" stroke-width="3.4" fill="none"/></svg></div>
<span class="t" style="left:18.00px;top:679px;font-size:16.5px;line-height:16.5px;font-weight:bold;transform:scaleX(1.3503);">Folder:</span>
<div class="b sunk" style="left:108px;top:676px;width:202px;height:23px;background:#ffffd0;"></div>
<span class="t" style="left:111.00px;top:679px;font-size:16.5px;line-height:16.5px;transform:scaleX(1.2399);">RYAN07GT3</span>
<span class="t" style="left:18.00px;top:710px;font-size:16.5px;line-height:16.5px;font-weight:bold;transform:scaleX(1.3554);">Run ID:</span>
<div class="b sunk" style="left:108px;top:707px;width:242px;height:23px;background:#ffffd0;"></div>
<span class="t" style="left:111.00px;top:710px;font-size:16.5px;line-height:16.5px;transform:scaleX(1.2066);">STG2</span>
<span class="t" style="left:938.00px;top:679px;font-size:16.5px;line-height:16.5px;font-weight:bold;transform:scaleX(1.3503);">Folder:</span>
<div class="b sunk" style="left:1026px;top:676px;width:203px;height:23px;background:#ffffd0;"></div>
<span class="t" style="left:1030.00px;top:679px;font-size:16.5px;line-height:16.5px;transform:scaleX(1.2399);">RYAN07GT3</span>
<span class="t" style="left:938.00px;top:710px;font-size:16.5px;line-height:16.5px;font-weight:bold;transform:scaleX(1.3554);">Run ID:</span>
<div class="b sunk" style="left:1026px;top:707px;width:243px;height:23px;background:#ffffd0;"></div>
<span class="t" style="left:1030.00px;top:710px;font-size:16.5px;line-height:16.5px;transform:scaleX(1.2391);">BASELINE</span>
<div class="b big" style="left:366px;top:675px;width:262px;height:59px;"></div>
<div class="b big" style="left:650px;top:675px;width:272px;height:59px;"></div>
<div class="b" id="taskbar" style="left:0px;top:734px;width:1280px;height:34px;"></div>
<div class="b" id="start" style="left:0px;top:738px;width:96px;height:30px;"></div>
<svg width="24" height="22" viewBox="0 0 24 22" style="left:9px;top:742px"><path d="M2 4 Q6 2 10 4 L9 10 Q5 8 1 10Z" fill="#e8582c"/><path d="M11 4 Q15 6 19 4 L18 10 Q14 12 10 10Z" fill="#7cc83c"/><path d="M1 11 Q5 9 9 11 L8 17 Q4 15 0 17Z" fill="#4a7ce0"/><path d="M10 11 Q14 13 18 11 L17 17 Q13 19 9 17Z" fill="#f0c020"/></svg>
<span class="t" style="left:35.00px;top:745px;font-size:17px;line-height:17px;font-weight:bold;font-style:italic;color:#fff;transform:scaleX(1.0177);text-shadow:1px 1px 1px #1a4a1a;">start</span>
<svg width="8" height="26" viewBox="0 0 8 26" style="left:105px;top:741px"><g fill="#1438a0"><circle cx="2" cy="3" r="1"/><circle cx="5" cy="6" r="1"/><circle cx="2" cy="9" r="1"/><circle cx="5" cy="12" r="1"/><circle cx="2" cy="15" r="1"/><circle cx="5" cy="18" r="1"/><circle cx="2" cy="21" r="1"/></g></svg>
<div class="b tb" style="left:116px;top:741px;width:159px;height:25px;background:linear-gradient(to bottom,#1a46b0 0%,#1c4ab6 30%,#1e4ebc 100%);border:1px solid #143c9c;"></div>
<svg width="18" height="18" viewBox="0 0 18 18" style="left:126px;top:745px"><rect x="1" y="1" width="15" height="15" fill="#f4f4f4" stroke="#d0d0e0"/><path d="M3 5h11M3 9h11M3 13h11M5 2v13M9 2v13M13 2v13" stroke="#c0c0c0" stroke-width="0.6" fill="none"/><path d="M3 14 L7 11 L10 10 L14 5" stroke="#c03030" stroke-width="1.3" fill="none"/></svg>
<span class="t" style="left:146.00px;top:749px;font-size:11px;line-height:11px;color:#fff;transform:scaleX(0.9711);">Dynapack</span>
<div class="b tb" style="left:276px;top:741px;width:159px;height:25px;background:linear-gradient(to bottom,#f08a20 0%,#ee8414 25%,#e87e0c 70%,#e07808 100%);border:1px solid #c86c10;border-top-color:#ffc070;border-left-color:#ffb050;"></div>
<svg width="18" height="14" viewBox="0 0 18 14" style="left:285px;top:746px"><path d="M1 6L5 2H16L13 6Z" fill="#e8e8e8" stroke="#808080" stroke-width="0.6"/><rect x="1" y="6" width="12" height="5" fill="#b0b0b0" stroke="#606060" stroke-width="0.6"/><path d="M13 6L16 2V7L13 11Z" fill="#909090" stroke="#606060" stroke-width="0.6"/></svg>
<span class="t" style="left:305.00px;top:749px;font-size:11px;line-height:11px;color:#fff;transform:scaleX(0.9942);">Hondata (E:)</span>
<div class="b" id="tray" style="left:1180px;top:739px;width:100px;height:29px;"></div>
<svg width="20" height="20" viewBox="0 0 20 20" style="left:1170px;top:743px"><circle cx="10" cy="10" r="8.5" fill="#2a80e8" stroke="#9cc8f8" stroke-width="1"/><path d="M11.5 5.5L7 10L11.5 14.5" stroke="#fff" stroke-width="2.2" fill="none"/></svg>
<svg width="16" height="16" viewBox="0 0 16 16" style="left:1191px;top:745px"><path d="M2 3 Q5 0 8 2 L6 6 Q4 5 2 3Z" fill="#30b030"/><path d="M4 8L10 6L14 11L7 14Z" fill="#c0a8c0" stroke="#504050" stroke-width="0.8"/><path d="M6 4L8 9" stroke="#208020" stroke-width="1.5"/></svg>
<span class="t" style="left:1216.30px;top:748px;font-size:11px;line-height:11px;color:#fff;transform:scaleX(1.0184);">9:16 a.m.</span>
</div>
</body>
</html>
